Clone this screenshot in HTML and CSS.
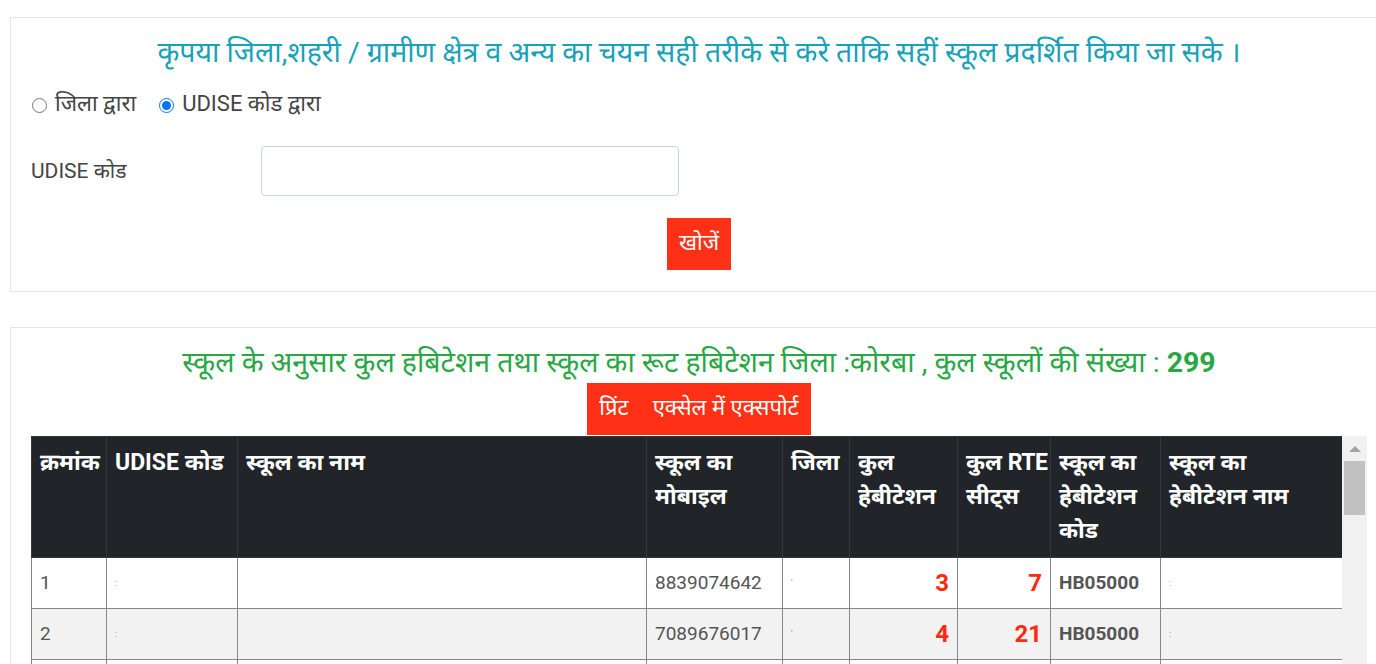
FILE: index.html
```html
<!DOCTYPE html>
<html lang="hi">
<head>
<meta charset="utf-8">
<title>स्कूल हबिटेशन</title>
<link rel="stylesheet" href="styles.css">
</head>
<body>
<section class="card search-card">
  <h2 class="notice">कृपया जिला,शहरी / ग्रामीण क्षेत्र व अन्य का चयन सही तरीके से करे ताकि सहीं स्कूल प्रदर्शित किया जा सके ।</h2>
  <div class="radio-row">
    <label class="radio"><input type="radio" name="by"> जिला द्वारा</label>
    <label class="radio"><input type="radio" name="by" checked> UDISE कोड द्वारा</label>
  </div>
  <div class="form-row">
    <label class="field-label" for="udise">UDISE कोड</label>
    <input class="field-input" id="udise" type="text">
  </div>
  <div class="btn-row">
    <button class="btn">खोजें</button>
  </div>
</section>

<section class="card result-card">
  <h2 class="summary">स्कूल के अनुसार कुल हबिटेशन तथा स्कूल का रूट हबिटेशन जिला :कोरबा , कुल स्कूलों की संख्या : <b>299</b></h2>
  <div class="btn-row tight">
    <button class="btn">प्रिंट</button><button class="btn">एक्सेल में एक्सपोर्ट</button>
  </div>
  <div class="table-frame">
    <div class="table-wrap">
      <table class="grid">
        <thead>
          <tr>
            <th class="c1">क्रमांक</th>
            <th class="c2">UDISE कोड</th>
            <th class="c3">स्कूल का नाम</th>
            <th class="c4">स्कूल का मोबाइल</th>
            <th class="c5">जिला</th>
            <th class="c6">कुल हेबीटेशन</th>
            <th class="c7"><span class="nowrap">कुल <span class="latin">RTE</span></span> सीट्स</th>
            <th class="c8">स्कूल का हेबीटेशन कोड</th>
            <th class="c9">स्कूल का हेबीटेशन नाम</th>
          </tr>
        </thead>
        <tbody>
          <tr><td>1</td><td><span class="blur">:</span></td><td></td><td>8839074642</td><td><span class="blur">'</span></td><td class="num">3</td><td class="num">7</td><td class="code">HB05000</td><td><span class="blur">:</span></td></tr>
          <tr><td>2</td><td><span class="blur">:</span></td><td></td><td>7089676017</td><td><span class="blur">'</span></td><td class="num">4</td><td class="num">21</td><td class="code">HB05000</td><td><span class="blur">:</span></td></tr>
          <tr><td>3</td><td><span class="blur">:</span></td><td></td><td>9406132754</td><td><span class="blur">'</span></td><td class="num">2</td><td class="num">5</td><td class="code">HB05000</td><td><span class="blur">:</span></td></tr>
          <tr><td>4</td><td><span class="blur">:</span></td><td></td><td>9977481203</td><td><span class="blur">'</span></td><td class="num">5</td><td class="num">12</td><td class="code">HB05000</td><td><span class="blur">:</span></td></tr>
          <tr><td>5</td><td><span class="blur">:</span></td><td></td><td>7000214985</td><td><span class="blur">'</span></td><td class="num">1</td><td class="num">3</td><td class="code">HB05000</td><td><span class="blur">:</span></td></tr>
        </tbody>
      </table>
    </div>
    <div class="scrollbar" aria-hidden="true">
      <div class="sb-arrow"></div>
      <div class="sb-thumb"></div>
    </div>
  </div>
</section>
</body>
</html>
```
FILE: styles.css
```css
html, body {
  margin: 0;
  padding: 0;
  background: #fff;
  overflow-x: hidden;
}
body {
  font-family: "Roboto", "Noto Sans Devanagari", "Noto Sans", sans-serif;
  color: #555;
  padding-top: 17px;
}
.card {
  box-sizing: border-box;
  width: 1378px;
  margin-left: 10px;
  border: 1px solid #e6e6e6;
  padding: 16px 20px 21px;
}
.result-card {
  margin-top: 35px;
  padding-top: 16px;
}
.notice, .summary {
  margin: 0;
  text-align: center;
  font-size: 28.5px;
  line-height: 38px;
  font-weight: 400;
}
.notice {
  color: #17a2b8;
  margin-bottom: 17px;
}
.summary { color: #28a745; }
.summary b { font-weight: 700; }

.radio-row {
  display: flex;
  gap: 22px;
  height: 32px;
  align-items: center;
  font-size: 22px;
  color: #444;
}
.radio {
  display: flex;
  align-items: center;
  gap: 8px;
}
.radio input {
  margin: 0 0 0 1px;
  width: 15px;
  height: 15px;
}
.form-row {
  display: grid;
  grid-template-columns: 230px 418px;
  align-items: center;
  margin-top: 25px;
}
.field-label {
  font-size: 21px;
  color: #444;
  padding-top: 4px;
}
.field-input {
  box-sizing: border-box;
  height: 50px;
  border: 1px solid #ced4da;
  border-radius: 4px;
  font-size: 18px;
  padding: 0 12px;
}
.btn-row {
  display: flex;
  justify-content: center;
  margin-top: 22px;
}
.btn-row.tight { margin-top: 1px; }
.btn {
  height: 52px;
  border: 0;
  background: #fe3016;
  color: #fff;
  font-family: inherit;
  font-size: 22px;
  padding: 0 12px;
}

.table-frame {
  display: flex;
  margin-top: 1px;
  height: 300px;
}
.table-wrap {
  width: 1312px;
  overflow: hidden;
}
.scrollbar {
  width: 25px;
  background: #f1f1f1;
  display: flex;
  flex-direction: column;
  align-items: center;
}
.sb-arrow {
  width: 0;
  height: 0;
  margin-top: 10px;
  border-left: 6px solid transparent;
  border-right: 6px solid transparent;
  border-bottom: 6px solid #a3a3a3;
}
.sb-thumb {
  width: 21px;
  height: 54px;
  margin-top: 9px;
  background: #c1c1c1;
}
.grid {
  width: 1311px;
  border-collapse: collapse;
  table-layout: fixed;
}
.grid th, .grid td { box-sizing: border-box; }
.grid th {
  background: #212529;
  color: #fff;
  font-weight: 700;
  font-size: 23px;
  line-height: 34px;
  text-align: left;
  vertical-align: top;
  padding: 9px 8px;
  border: 1px solid #32383e;
}
.grid th.c9 { padding-right: 34px; }
.nowrap { white-space: nowrap; }
.latin { letter-spacing: -0.5px; }
.grid td {
  font-size: 19px;
  line-height: 34px;
  padding: 8px;
  border: 1px solid #888;
  color: #555;
  white-space: nowrap;
  overflow: hidden;
}
.grid tbody tr:nth-child(even) td { background: #f2f2f2; }
.grid td.num {
  text-align: right;
  color: #ff2a10;
  font-weight: 700;
  font-size: 24px;
}
.grid td.code { font-weight: 700; }
.blur {
  font-size: 9px;
  color: #888;
  vertical-align: top;
}
.c1 { width: 75px; }
.c2 { width: 131px; }
.c3 { width: 409px; }
.c4 { width: 136px; }
.c5 { width: 67px; }
.c6 { width: 108px; }
.c7 { width: 93px; }
.c8 { width: 110px; }
.c9 { width: 182px; }
```
